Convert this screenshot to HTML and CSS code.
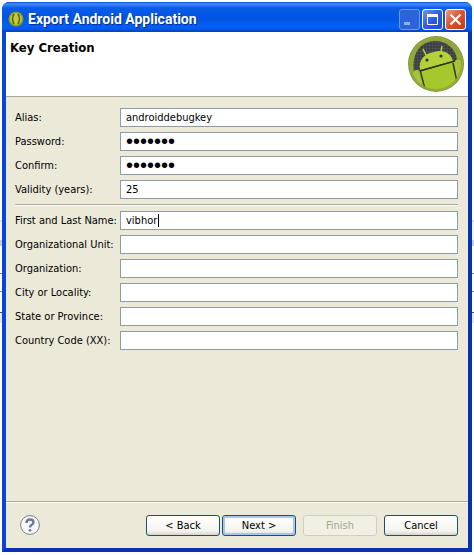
FILE: index.html
```html
<!DOCTYPE html>
<html lang="en">

<head>
    <meta charset="UTF-8">
    <meta name="viewport" content="width=device-width, initial-scale=1.0">
    <link rel="stylesheet" href="styles.css">
    <title>Export Android Application</title>
</head>

<body>
    <form class="window">
        <header class="titlebar">
            <svg class="app-icon" viewBox="0 0 16 16">
                <circle cx="8" cy="8" r="7.5" fill="#8c9c1e" />
                <circle cx="8" cy="8" r="6" fill="#c3cc38" />
                <path d="M6.5 3.5Q4.8 3.5 5 6Q5 7.7 3.8 8Q5 8.3 5 10Q4.8 12.5 6.5 12.5M9.5 3.5Q11.2 3.5 11 6Q11 7.7 12.2 8Q11 8.3 11 10Q11.2 12.5 9.5 12.5" fill="none" stroke="#4e5a14" stroke-width="1.4" />
            </svg>
            <h1>Export Android Application</h1>
            <div class="controls">
                <button type="button" class="min" aria-label="Minimize" disabled>
                    <svg viewBox="0 0 19 19"><path d="M4 13.5H10" stroke="#8fb0f0" stroke-width="3" /></svg>
                </button>
                <button type="button" class="max" aria-label="Maximize">
                    <svg viewBox="0 0 19 19"><path d="M4.5 5V14.5H14.5V5" fill="none" stroke="#fff" /><path d="M4 5.5H15" stroke="#fff" stroke-width="3" /></svg>
                </button>
                <button type="button" class="close" aria-label="Close">
                    <svg viewBox="0 0 19 19"><path d="M4.5 4.5L14.5 14.5M14.5 4.5L4.5 14.5" stroke="#fff" stroke-width="2.2" /></svg>
                </button>
            </div>
        </header>

        <div class="banner">
            <h2>Key Creation</h2>
            <svg class="logo" viewBox="0 0 56 56">
                <defs>
                    <clipPath id="disc"><circle cx="28" cy="28" r="27" /></clipPath>
                    <linearGradient id="green" x1="0" y1="0" x2="0" y2="1">
                        <stop offset="0" stop-color="#8ea440" />
                        <stop offset="1" stop-color="#93b423" />
                    </linearGradient>
                    <pattern id="mesh" width="3" height="3" patternUnits="userSpaceOnUse">
                        <rect width="3" height="3" fill="#3a3e42" />
                        <path d="M0 0H3M0 0V3" stroke="#54595d" />
                    </pattern>
                </defs>
                <circle cx="28" cy="28" r="28" fill="#84983e" />
                <g clip-path="url(#disc)">
                    <rect width="56" height="56" fill="url(#green)" />
                    <path d="M6 36C3 19 12 5 27 5C38 5 47 12 49 23L46 26L12 36Z" fill="url(#mesh)" />
                    <path d="M12 34C10 24 17 17 26 16C35 13 43 17 45 25Z" fill="#b3d138" />
                    <path d="M18 19L15 13M33 16L34 10" stroke="#b3d138" stroke-width="1.6" />
                    <path d="M12 35L46 26L50 56H18Z" fill="#a6c82c" />
                    <path d="M4 39Q6 32 12 35L18 56H6ZM46 26Q51 21 57 28V53L50 50Z" fill="#a6c43a" />
                    <path d="M12 35L47 25M12 34L17 53M45 27L49 46" fill="none" stroke="#2d3519" stroke-width="1.4" />
                    <circle cx="19" cy="24" r="1.6" fill="#30391d" />
                    <circle cx="33" cy="20" r="1.6" fill="#30391d" />
                </g>
                <circle cx="28" cy="28" r="26" fill="none" stroke="#8faa36" stroke-width="2" />
            </svg>
        </div>

        <main class="content">
            <div class="fields">
                <label for="alias">Alias:</label>
                <input id="alias" type="text" value="androiddebugkey">
                <label for="password">Password:</label>
                <input id="password" type="password" value="android">
                <label for="confirm">Confirm:</label>
                <input id="confirm" type="password" value="android">
                <label for="validity">Validity (years):</label>
                <input id="validity" type="text" value="25">
            </div>
            <hr>
            <div class="fields">
                <label for="name">First and Last Name:</label>
                <div class="focused">
                    <input id="name" type="text" value="vibhor">
                    <span class="caret"></span>
                </div>
                <label for="unit">Organizational Unit:</label>
                <input id="unit" type="text">
                <label for="organization">Organization:</label>
                <input id="organization" type="text">
                <label for="city">City or Locality:</label>
                <input id="city" type="text">
                <label for="state">State or Province:</label>
                <input id="state" type="text">
                <label for="country">Country Code (XX):</label>
                <input id="country" type="text">
            </div>
        </main>

        <footer class="actions">
            <button type="button" class="help" aria-label="Help">
                <svg viewBox="0 0 20 20">
                    <circle cx="10" cy="10" r="9.4" fill="#f7f8fa" stroke="#777d8b" />
                    <path d="M6.5 8Q6.5 4.5 10 4.5Q13.5 4.5 13.5 7.3Q13.5 9 11.5 10Q10 10.8 10 12.5" fill="none" stroke="#6c7791" stroke-width="2.4" />
                    <circle cx="10" cy="15.3" r="1.4" fill="#6c7791" />
                </svg>
            </button>
            <button type="button" class="btn">&lt; Back</button>
            <button type="button" class="btn default">Next &gt;</button>
            <button type="button" class="btn finish" disabled>Finish</button>
            <button type="button" class="btn">Cancel</button>
        </footer>
    </form>
</body>

</html>
```
FILE: styles.css
```css
* {
    box-sizing: border-box;
    margin: 0;
    padding: 0;
}

body {
    display: flex;
    min-height: 100vh;
    padding: 2px 2px 3px;
    font-family: "DejaVu Sans Condensed", Tahoma, sans-serif;
    font-size: 11px;
    color: #000;
    /* edge of the window that lies behind the dialog */
    background: linear-gradient(#fff 220px, #d9dcee 220px, #d9dcee 222px, #f4f4fb 222px, #f4f4fb 240px, #c9cde4 240px, #c9cde4 246px, #fff 246px, #fff 273px, #7783ad 273px, #7783ad 274px, #fff 274px, #fff 291px, #7783ad 291px, #7783ad 292px, #fff 292px, #fff 312px, #555 312px, #555 313px, #e4e6f2 313px, #e4e6f2 323px, #fff 323px);
}

button,
input {
    font: inherit;
    color: inherit;
}

.window {
    flex: 1;
    display: flex;
    flex-direction: column;
    min-width: 0;
    border: 4px solid #0a45d8;
    border-color: #0a45d8 #0831b4 #0831b4 #0a45d8;
    border-top: 0;
    border-radius: 7px 7px 0 0;
    background: #ebe9d8;
}

.titlebar {
    display: flex;
    align-items: center;
    height: 30px;
    margin: 0 -4px;
    padding: 4px 6px 0;
    border-radius: 7px 7px 0 0;
    background: linear-gradient(#0a52d8, #3b8ff8 2px, #0a5ce6 6px, #0054e3 16px, #0560f5 24px, #0558ec 27px, #0340b8);
}

.titlebar h1 {
    flex: 1;
    margin-left: 4px;
    font-family: Roboto, "Trebuchet MS", sans-serif;
    font-size: 14px;
    line-height: 20px;
    color: #fff;
    text-shadow: 1px 1px 1px #0a2a80;
}

.app-icon {
    width: 16px;
    height: 16px;
}

.controls {
    display: flex;
    gap: 2px;
}

.controls button {
    width: 21px;
    height: 21px;
    border: 1px solid #fff;
    border-radius: 3px;
    background: linear-gradient(135deg, #6a98f4, #2a5de0 50%, #1a50d4);
}

.controls .min {
    border-color: #6f9bf0;
    background: #2c62dc;
}

.controls .close {
    background: linear-gradient(135deg, #ee9a80, #dc5030 50%, #c83c18);
}

.controls svg {
    display: block;
}

.banner {
    display: flex;
    justify-content: space-between;
    height: 65px;
    padding: 4px;
    border-bottom: 1px solid #aca899;
    background: #fff;
}

.banner h2 {
    font-size: 13px;
    line-height: 24px;
}

.logo {
    width: 56px;
    height: 56px;
}

.content {
    flex: 1;
    padding: 11px 10px 0 9px;
}

.fields {
    display: grid;
    grid-template-columns: 96px 1fr;
    grid-auto-rows: 20px;
    gap: 4px 9px;
}

.fields label {
    line-height: 20px;
    white-space: nowrap;
}

.fields input {
    width: 100%;
    min-width: 0;
    height: 19px;
    padding: 0 5px;
    border: 1px solid #8d9aa8;
    background: #fff;
}

.fields input[type="password"] {
    font-family: "Liberation Sans", Arial, sans-serif;
    font-size: 20px;
}

.focused {
    position: relative;
}

.caret {
    position: absolute;
    left: 38px;
    top: 3px;
    width: 1px;
    height: 13px;
    background: #000;
}

hr {
    height: 2px;
    margin: 4px 0 5px;
    border: 0;
    border-top: 1px solid #aca899;
    border-bottom: 1px solid #fff;
}

.actions {
    display: flex;
    align-items: center;
    height: 47px;
    padding: 0 10px 0 14px;
    border-top: 1px solid #aca899;
    box-shadow: inset 0 1px #fff;
}

.help {
    width: 20px;
    height: 20px;
    margin-right: auto;
    border: 0;
    background: none;
}

.help svg {
    display: block;
}

.btn {
    width: 74px;
    height: 21px;
    margin-left: 2px;
    border: 1px solid #1c4f78;
    border-radius: 3px;
    background: linear-gradient(#fff, #f3f3ee 80%, #d8d2c4);
}

.default {
    box-shadow: inset 0 0 0 2px #a9c4ee;
}

.finish {
    color: #a5a392;
    border-color: #d0cebf;
    background: #f1f0e5;
}

.finish,
.finish + .btn {
    margin-left: 7px;
}
```
